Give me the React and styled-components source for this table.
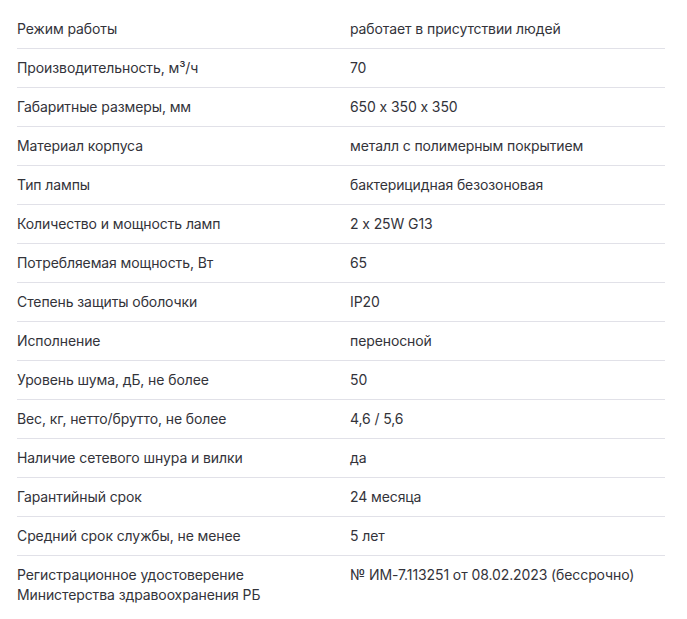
import React from "react";
import styled, { createGlobalStyle } from "styled-components";

const GlobalStyle = createGlobalStyle`
  body {
    margin: 0;
    background: #fff;
    font-family: Inter, "Noto Sans", sans-serif;
  }
`;

const specs = [
  ["Режим работы", "работает в присутствии людей"],
  ["Производительность, м³/ч", "70"],
  ["Габаритные размеры, мм", "650 x 350 x 350"],
  ["Материал корпуса", "металл с полимерным покрытием"],
  ["Тип лампы", "бактерицидная безозоновая"],
  ["Количество и мощность ламп", "2 x 25W G13"],
  ["Потребляемая мощность, Вт", "65"],
  ["Степень защиты оболочки", "IP20"],
  ["Исполнение", "переносной"],
  ["Уровень шума, дБ, не более", "50"],
  ["Вес, кг, нетто/брутто, не более", "4,6 / 5,6"],
  ["Наличие сетевого шнура и вилки", "да"],
  ["Гарантийный срок", "24 месяца"],
  ["Средний срок службы, не менее", "5 лет"],
  [
    "Регистрационное удостоверение Министерства здравоохранения РБ",
    "№ ИМ-7.113251 от 08.02.2023 (бессрочно)",
  ],
];

const App = () => {
  return (
    <>
      <GlobalStyle />
      <Wrapper>
        {specs.map(([label, value], i) => (
          <Row key={label} $last={i === specs.length - 1}>
            <Label $narrow={i === specs.length - 1}>{label}</Label>
            <Value>{value}</Value>
          </Row>
        ))}
      </Wrapper>
    </>
  );
};

const Wrapper = styled.div`
  padding: 10px 22px 0 17px;
  display: flex;
  flex-direction: column;
`;

const Row = styled.div`
  display: grid;
  grid-template-columns: 333px 1fr;
  padding: 9px 0;
  border-bottom: ${(p) => (p.$last ? "none" : "1px solid #e1e1e8")};
  font-size: 14px;
  line-height: 20px;
  letter-spacing: -0.1px;
  font-feature-settings: "calt" 0;
  color: #33333a;
`;

const Label = styled.div`
  max-width: ${(p) => (p.$narrow ? "250px" : "none")};
`;

const Value = styled.div``;

export default App;
